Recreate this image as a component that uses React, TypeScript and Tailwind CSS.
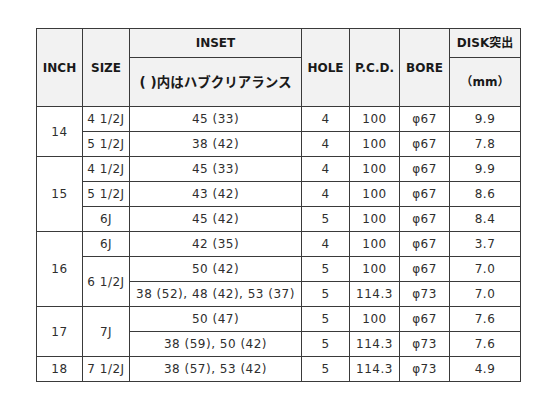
type Cell = { text: string; rowSpan?: number };

type Row = {
  inch?: Cell;
  size?: Cell;
  inset: string;
  hole: string;
  pcd: string;
  bore: string;
  disk: string;
};

const rows: Row[] = [
  { inch: { text: '14', rowSpan: 2 }, size: { text: '4 1/2J' }, inset: '45 (33)', hole: '4', pcd: '100', bore: 'φ67', disk: '9.9' },
  { size: { text: '5 1/2J' }, inset: '38 (42)', hole: '4', pcd: '100', bore: 'φ67', disk: '7.8' },
  { inch: { text: '15', rowSpan: 3 }, size: { text: '4 1/2J' }, inset: '45 (33)', hole: '4', pcd: '100', bore: 'φ67', disk: '9.9' },
  { size: { text: '5 1/2J' }, inset: '43 (42)', hole: '4', pcd: '100', bore: 'φ67', disk: '8.6' },
  { size: { text: '6J' }, inset: '45 (42)', hole: '5', pcd: '100', bore: 'φ67', disk: '8.4' },
  { inch: { text: '16', rowSpan: 3 }, size: { text: '6J' }, inset: '42 (35)', hole: '4', pcd: '100', bore: 'φ67', disk: '3.7' },
  { size: { text: '6 1/2J', rowSpan: 2 }, inset: '50 (42)', hole: '5', pcd: '100', bore: 'φ67', disk: '7.0' },
  { inset: '38 (52), 48 (42), 53 (37)', hole: '5', pcd: '114.3', bore: 'φ73', disk: '7.0' },
  { inch: { text: '17', rowSpan: 2 }, size: { text: '7J', rowSpan: 2 }, inset: '50 (47)', hole: '5', pcd: '100', bore: 'φ67', disk: '7.6' },
  { inset: '38 (59), 50 (42)', hole: '5', pcd: '114.3', bore: 'φ73', disk: '7.6' },
  { inch: { text: '18' }, size: { text: '7 1/2J' }, inset: '38 (57), 53 (42)', hole: '5', pcd: '114.3', bore: 'φ73', disk: '4.9' },
];

const th = 'border border-[#3a3a3a] bg-[#f2f2f2] p-0 text-center align-middle font-bold text-[12px] text-[#1a1a1a]';
const td = 'h-[25px] border border-[#3a3a3a] bg-white p-0 text-center align-middle text-[12px] tracking-[0.5px] text-[#2e2e2e] whitespace-nowrap';

export default function App() {
  return (
    <div
      className="h-[413px] w-[559px] bg-white pl-[36px] pt-[28px]"
      style={{ fontFamily: '"DejaVu Sans", "Noto Sans CJK JP", sans-serif' }}
    >
      <table className="w-[485px] table-fixed border-collapse">
        <colgroup>
          <col className="w-[46px]" />
          <col className="w-[47px]" />
          <col className="w-[172px]" />
          <col className="w-[48px]" />
          <col className="w-[50px]" />
          <col className="w-[50px]" />
          <col className="w-[71px]" />
        </colgroup>
        <thead>
          <tr>
            <th rowSpan={2} className={th}>INCH</th>
            <th rowSpan={2} className={th}>SIZE</th>
            <th className={`${th} h-[29px]`}>INSET</th>
            <th rowSpan={2} className={th}>HOLE</th>
            <th rowSpan={2} className={th}>P.C.D.</th>
            <th rowSpan={2} className={th}>BORE</th>
            <th className={`${th} h-[29px]`}>DISK突出</th>
          </tr>
          <tr>
            <th className={`${th} h-[49px] text-[13.5px]`}>( )内はハブクリアランス</th>
            <th className={`${th} h-[49px]`}>（mm）</th>
          </tr>
        </thead>
        <tbody>
          {rows.map((r, i) => (
            <tr key={i}>
              {r.inch && (
                <td rowSpan={r.inch.rowSpan} className={td}>{r.inch.text}</td>
              )}
              {r.size && (
                <td rowSpan={r.size.rowSpan} className={td}>{r.size.text}</td>
              )}
              <td className={td}>{r.inset}</td>
              <td className={td}>{r.hole}</td>
              <td className={td}>{r.pcd}</td>
              <td className={td}>{r.bore}</td>
              <td className={td}>{r.disk}</td>
            </tr>
          ))}
        </tbody>
      </table>
    </div>
  );
}
